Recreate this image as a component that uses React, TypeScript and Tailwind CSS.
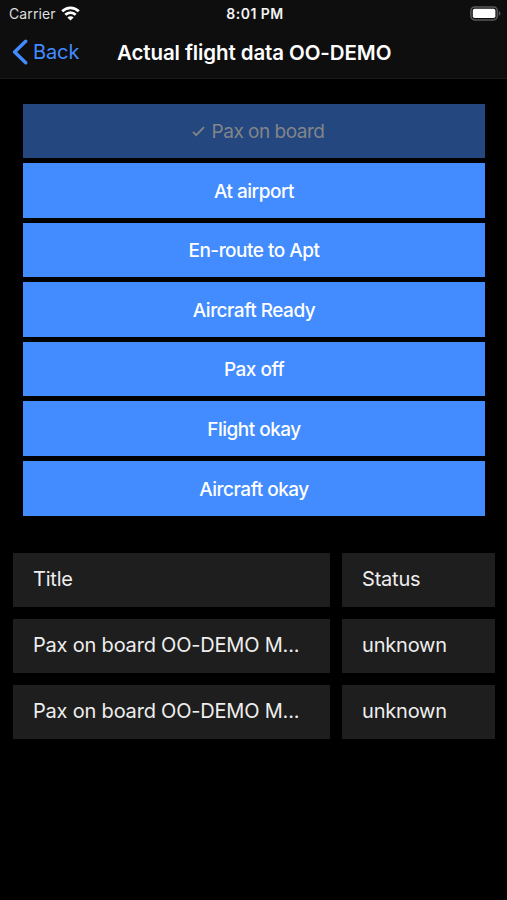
import React from "react";

interface StatusAction {
  label: string;
  done?: boolean;
}

interface FlightStatus {
  title: string;
  status: string;
}

const actions: StatusAction[] = [
  { label: "Pax on board", done: true },
  { label: "At airport" },
  { label: "En-route to Apt" },
  { label: "Aircraft Ready" },
  { label: "Pax off" },
  { label: "Flight okay" },
  { label: "Aircraft okay" },
];

const rows: FlightStatus[] = [
  { title: "Title", status: "Status" },
  { title: "Pax on board OO-DEMO M...", status: "unknown" },
  { title: "Pax on board OO-DEMO M...", status: "unknown" },
];

const WifiIcon: React.FC = () => (
  <svg width="19" height="15" viewBox="0 0 19 15" fill="none" stroke="#fff" strokeWidth="2.7">
    <path d="M1.2 5.3C6 .6 13 .6 17.8 5.3" />
    <path d="M4.3 8.7C7.3 5.8 11.7 5.8 14.7 8.7" />
    <path d="M9.5 14.6L6.4 11.4C8.2 9.7 10.8 9.7 12.6 11.4Z" fill="#fff" stroke="none" />
  </svg>
);

const BatteryIcon: React.FC = () => (
  <svg width="31" height="15" viewBox="0 0 31 15">
    <rect x="0.9" y="0.9" width="26.4" height="13" rx="3.8" fill="none" stroke="#59595b" strokeWidth="1.5" />
    <rect x="2.8" y="2.8" width="22.6" height="9.2" rx="1.8" fill="#fff" />
    <path d="M28.8 5v4.8c2.2-.8 2.2-4 0-4.8z" fill="#59595b" />
  </svg>
);

const Header: React.FC = () => (
  <header className="h-[79px] bg-[#0e0e0e] border-b border-[#1a1a1a]">
    <div className="h-[27px] grid grid-cols-3 items-center pl-[9px] pr-[6px] text-[14px]">
      <div className="flex items-center gap-[5px] text-[#dedede]">
        <span className="tracking-[0.1px]">Carrier</span>
        <WifiIcon />
      </div>
      <span className="text-center font-semibold tracking-[0.5px] text-[#f4f4f4]">8:01 PM</span>
      <div className="flex justify-end">
        <BatteryIcon />
      </div>
    </div>
    <div className="h-[51px] flex items-center pl-[12px]">
      <button className="w-[105px] pb-px flex items-center gap-[5px] text-[20px] text-[#428cff]">
        <svg width="16" height="26" viewBox="0 0 16 26" fill="none" stroke="currentColor" strokeWidth="3.4" strokeLinecap="round" strokeLinejoin="round">
          <path d="M13.7 2.2L2.6 13l11.1 10.8" />
        </svg>
        <span className="tracking-[-0.1px]">Back</span>
      </button>
      <h1 className="pt-px text-[20.5px] font-semibold tracking-[-0.1px] text-white whitespace-nowrap">
        Actual flight data OO-DEMO
      </h1>
    </div>
  </header>
);

const App: React.FC = () => {
  return (
    <div className="w-full h-[900px] bg-black font-['Inter','Liberation_Sans',sans-serif] overflow-hidden">
      <Header />
      <main>
        <div className="mt-[24.5px] ml-[23px] w-[462px] flex flex-col gap-[5px] text-[19px] tracking-[-0.5px]">
          {actions.map((action) => (
            <button
              key={action.label}
              disabled={action.done}
              className={
                action.done
                  ? "h-[54.6px] pt-[2px] pl-[8px] flex items-center justify-center gap-[7px] bg-[#23477e] text-[#828589]"
                  : "h-[54.6px] pt-[3px] flex items-center justify-center bg-[#428cff] text-white font-medium"
              }
            >
              {action.done && (
                <svg width="13" height="11" viewBox="0 0 13 11" fill="none" stroke="currentColor" strokeWidth="1.8">
                  <path d="M1 5.8l3.2 3.4L12 1.2" />
                </svg>
              )}
              <span>{action.label}</span>
            </button>
          ))}
        </div>
        <div className="mt-[37px] ml-[13px] flex flex-col gap-[12px]">
          {rows.map((row, index) => (
            <div key={index} className="flex gap-[12px] text-[20px] tracking-[-0.2px] text-[#eee]">
              <div className="w-[317px] h-[54px] flex items-center bg-[#1e1e1e] pl-[20px] pb-px whitespace-nowrap">
                {row.title}
              </div>
              <div className="w-[153px] h-[54px] flex items-center bg-[#1e1e1e] pl-[20px] pb-px">
                {row.status}
              </div>
            </div>
          ))}
        </div>
      </main>
    </div>
  );
};

export default App;
